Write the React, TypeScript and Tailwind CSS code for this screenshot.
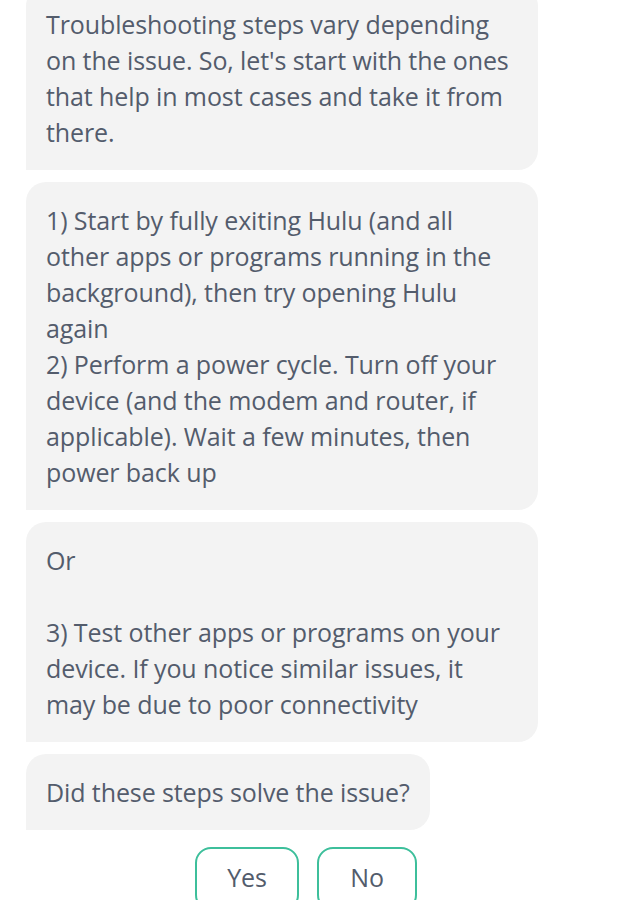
import React from "react";

const font = { fontFamily: '"Open Sans", "Noto Sans", sans-serif' };

function Bubble({ lines, w = "w-[512px]" }: { lines: string[]; w?: string }) {
  return (
    <div className={`${w} bg-[#f3f3f3] rounded-tl-[20px] rounded-tr-[20px] rounded-br-[20px] px-5 py-5 text-[25px] leading-[36px] tracking-[-0.1px] text-[#535c6c]`}>
      {lines.map((l, i) => (
        <div key={i} className="whitespace-nowrap h-[36px]">{l}</div>
      ))}
    </div>
  );
}

export default function App() {
  return (
    <div className="w-[620px] h-[900px] overflow-hidden bg-white" style={font}>
      <div className="pl-[26px] flex flex-col gap-3 -mt-[14px]">
        <Bubble
          lines={[
            "Troubleshooting steps vary depending",
            "on the issue. So, let's start with the ones",
            "that help in most cases and take it from",
            "there.",
          ]}
        />
        <Bubble
          lines={[
            "1) Start by fully exiting Hulu (and all",
            "other apps or programs running in the",
            "background), then try opening Hulu",
            "again",
            "2) Perform a power cycle. Turn off your",
            "device (and the modem and router, if",
            "applicable). Wait a few minutes, then",
            "power back up",
          ]}
        />
        <Bubble
          lines={[
            "Or",
            "",
            "3) Test other apps or programs on your",
            "device. If you notice similar issues, it",
            "may be due to poor connectivity",
          ]}
        />
        <Bubble w="w-[404px]" lines={["Did these steps solve the issue?"]} />
      </div>
      <div className="flex justify-center gap-[18px] pr-2 mt-[17px]">
        <button className="w-[104px] h-[64px] border-2 border-[#3dbf9b] rounded-[16px] text-[25px] tracking-[-0.1px] text-[#535c6c] pb-[2px]">Yes</button>
        <button className="w-[100px] h-[64px] border-2 border-[#3dbf9b] rounded-[16px] text-[25px] tracking-[-0.1px] text-[#535c6c] pb-[2px]">No</button>
      </div>
    </div>
  );
}
